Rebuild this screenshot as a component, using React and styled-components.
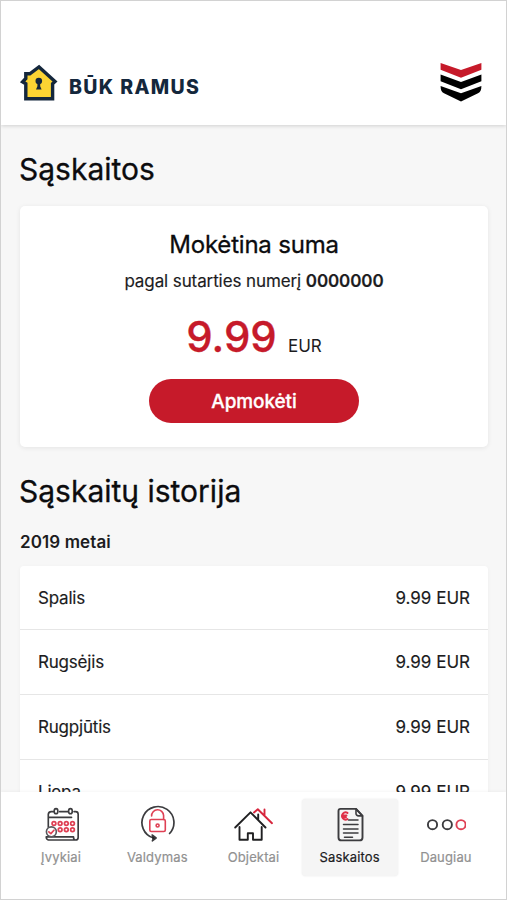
import React from "react";
import styled, { createGlobalStyle } from "styled-components";

const GlobalStyle = createGlobalStyle`
  * {
    box-sizing: border-box;
  }
  body {
    margin: 0;
    background: #fff;
    font-family: Inter, "Liberation Sans", sans-serif;
    color: #1c1c1e;
  }
`;

const bills = [
  { month: "Spalis", amount: "9.99 EUR" },
  { month: "Rugsėjis", amount: "9.99 EUR" },
  { month: "Rugpjūtis", amount: "9.99 EUR" },
  { month: "Liepa", amount: "9.99 EUR" },
];

function HouseLogo() {
  return (
    <svg width="40" height="40" viewBox="0 0 40 40">
      <path
        d="M6.8 36.700V21.800L3.600 19.800L6.800 16.500V11.800H10.800L20 5L36 19.600L33.600 21.800V36.700Z"
        fill="#fbd433"
        stroke="#14273c"
        strokeWidth="3.4"
      />
      <circle cx="19.8" cy="19" r="3.3" fill="#14273c" />
      <path d="M18.4 20h2.800v4.200l1.400 3.200h-5.600l1.400-3.200z" fill="#14273c" />
    </svg>
  );
}

function ShieldLogo() {
  return (
    <svg width="42" height="40" viewBox="0 0 42 40">
      <path d="M0.6 1L21 8L41.400 1V7.700L21 15.800L0.600 7.700Z" fill="#c61a2a" />
      <path d="M0.6 12.500L21 20L41.400 12.500V19.200L21 27.200L0.600 19.200Z" fill="#000" />
      <path d="M0.6 24L21 31.300L41.400 24C41.400 28 40.400 30 38 31.200L21 39.500L4 31.200C1.600 30 0.600 28 0.600 24Z" fill="#000" />
    </svg>
  );
}

function CalendarIcon() {
  const dots = [
    [12, 17.5], [18, 17.5], [24, 17.5], [30, 17.5],
    [18, 23.5], [24, 23.5], [30, 23.5],
  ];
  return (
    <Icon viewBox="0 0 40 40">
      <g transform="translate(0.600 0.500) scale(1.030)">
        <path d="M6.5 21V8.500a3 3 0 0 1 3-2.500h2M17.500 6h8M31.500 6H33a2.500 2.500 0 0 1 2.500 2.500v22.500a2.500 2.500 0 0 1-2.500 2.500H6.500a3 3 0 0 1-2-3H31c0 2 .8 3 2 3" />
        <path d="M7 11.500h22" strokeWidth="1.700" />
        <ellipse cx="14" cy="5.500" rx="1.800" ry="2.500" />
        <ellipse cx="28" cy="5.500" rx="1.800" ry="2.500" />
        {dots.map(([x, y]) => (
          <circle key={`${x}-${y}`} cx={x} cy={y} r="1.800" stroke="#df4054" strokeWidth="1.700" />
        ))}
        <circle cx="9.500" cy="25.500" r="4.800" fill="#fff" stroke="#58585c" />
        <path d="M7 25.500l2 1.800 3-3.300" stroke="#df4054" />
      </g>
    </Icon>
  );
}

function LockIcon() {
  return (
    <Icon viewBox="0 0 40 40">
      <g transform="translate(0.600 -2.500)">
        <path d="M32 31A16 16 0 1 0 15.500 35.300" strokeWidth="1.700" />
        <path d="M14.500 32.500l4 3-3.800 2.800" fill="#222" />
        <g stroke="#df4054">
          <rect x="12.200" y="17" width="15.500" height="12" rx="1.500" />
          <path d="M14 13.500a6 6 0 0 1 12-.5v4" />
          <circle cx="20" cy="23" r="1.500" />
        </g>
      </g>
    </Icon>
  );
}

function HomeIcon() {
  return (
    <Icon viewBox="0 0 40 40">
      <path d="M20 7.500L23.800 4.200L38 18.200M30.500 4.500v5.500" stroke="#d7263d" strokeWidth="1.900" />
      <g stroke="#202022" strokeWidth="1.900">
        <path d="M1.200 22.500L16.500 7.300L31.500 22.500M24.200 9.500v5.500" />
        <path d="M5.500 22v12.800h8.300v-6.500h5.200v6.500h8.700v-12.800" />
      </g>
    </Icon>
  );
}

function InvoiceIcon() {
  return (
    <Icon viewBox="0 0 40 40">
      <g transform="translate(0.500 0.400)">
        <path
          d="M10 3.500h15.500L32 10.500v21.500a3 3 0 0 1-3 3H11a3 3 0 0 1-3-3V5.500a2 2 0 0 1 2-2z"
          strokeWidth="1.900"
        />
        <path d="M25.500 3.500v4.500a2.500 2.500 0 0 0 2.500 2.500h4z" />
        <path d="M18 14.500h9.500M13 19.200h14.500M13 23.500h14.500M13 27.500h14.500M14 31.800h8" strokeWidth="1.500" />
        <path d="M17 7.500a3.600 3.600 0 1 0 0 6.200M12.500 10h3.500M12.500 11.800h3" stroke="#df3048" strokeWidth="1.900" />
      </g>
    </Icon>
  );
}

function MoreIcon() {
  return (
    <Icon viewBox="0 0 40 40">
      <circle cx="6.500" cy="19.700" r="4.600" strokeWidth="1.900" />
      <circle cx="21.300" cy="19.700" r="4.600" strokeWidth="1.900" />
      <circle cx="35" cy="19.700" r="4.600" strokeWidth="1.900" stroke="#df4054" />
    </Icon>
  );
}

const tabs = [
  { label: "Įvykiai", icon: CalendarIcon },
  { label: "Valdymas", icon: LockIcon },
  { label: "Objektai", icon: HomeIcon },
  { label: "Saskaitos", icon: InvoiceIcon, active: true },
  { label: "Daugiau", icon: MoreIcon },
];

function App() {
  return (
    <Phone>
      <GlobalStyle />
      <Header>
        <Brand>
          <HouseLogo />
          <BrandName>BŪK RAMUS</BrandName>
        </Brand>
        <ShieldLogo />
      </Header>
      <Content>
        <Title>Sąskaitos</Title>
        <PayCard>
          <CardTitle>Mokėtina suma</CardTitle>
          <Contract>
            pagal sutarties numerį <b>0000000</b>
          </Contract>
          <Amount>
            9.99 <Currency>EUR</Currency>
          </Amount>
          <PayButton>Apmokėti</PayButton>
        </PayCard>
        <Title>Sąskaitų istorija</Title>
        <Year>2019 metai</Year>
        <BillList>
          {bills.map((bill) => (
            <BillRow key={bill.month}>
              <Month>{bill.month}</Month>
              <span>{bill.amount}</span>
            </BillRow>
          ))}
        </BillList>
      </Content>
      <TabBar>
        {tabs.map(({ label, icon: TabIcon, active }) => (
          <Tab key={label} $active={active}>
            <TabIcon />
            {label}
          </Tab>
        ))}
      </TabBar>
    </Phone>
  );
}

const Phone = styled.div`
  width: 507px;
  height: 900px;
  display: flex;
  flex-direction: column;
  overflow: hidden;
  background: #f7f7f7;
  border: 1px solid #d2d2d2;
`;
const Header = styled.header`
  flex: none;
  height: 124px;
  display: flex;
  align-items: flex-end;
  justify-content: space-between;
  padding: 0 24px 23px 18px;
  background: #fff;
  box-shadow: 0 1px 4px rgba(0, 0, 0, 0.16);
`;
const Brand = styled.div`
  display: flex;
  align-items: center;
  gap: 10px;
`;
const BrandName = styled.div`
  padding-top: 9px;
  font-size: 19.5px;
  font-weight: 800;
  line-height: 24px;
  letter-spacing: 1.35px;
  color: #14273c;
`;
const Content = styled.main`
  flex: 1;
  min-height: 0;
  overflow: hidden;
  padding: 0 18px 0 19px;
`;
const Title = styled.h1`
  margin: 0 0 0 -1px;
  padding-top: 26px;
  height: 81px;
  font-size: 30px;
  font-weight: 400;
  line-height: 36px;
  -webkit-text-stroke: 0.3px;
  color: #0c0c0e;
`;
const PayCard = styled.section`
  height: 241px;
  display: flex;
  flex-direction: column;
  align-items: center;
  padding-top: 23px;
  border-radius: 5px;
  background: #fff;
  box-shadow: 0 1px 5px rgba(0, 0, 0, 0.08);
`;
const CardTitle = styled.h2`
  margin: 0;
  font-size: 24px;
  font-weight: 400;
  line-height: 32px;
  letter-spacing: -0.2px;
  -webkit-text-stroke: 0.3px;
  color: #0c0c0e;
`;
const Contract = styled.div`
  margin-top: 8px;
  font-size: 17px;
  line-height: 24px;
  letter-spacing: -0.1px;
  -webkit-text-stroke: 0.15px;
  b {
    font-weight: 600;
  }
`;
const Amount = styled.div`
  height: 50px;
  margin-top: 18px;
  font-size: 42px;
  font-weight: 500;
  line-height: 52px;
  -webkit-text-stroke: 0.3px;
  color: #c61a2a;
`;
const Currency = styled.span`
  font-size: 17px;
  font-weight: 400;
  -webkit-text-stroke: 0;
  color: #1c1c1e;
`;
const PayButton = styled.button`
  flex: none;
  margin-top: 18px;
  width: 210px;
  height: 44px;
  padding: 0;
  border: 0;
  border-radius: 22px;
  background: #c61a2a;
  color: #fff;
  font-family: inherit;
  font-size: 19px;
  font-weight: 500;
  letter-spacing: -0.1px;
  -webkit-text-stroke: 0.3px;
`;
const Year = styled.h3`
  margin: 0;
  height: 38px;
  padding-top: 2px;
  font-size: 17px;
  font-weight: 600;
  line-height: 25px;
  letter-spacing: 0.1px;
`;
const BillList = styled.div`
  border-radius: 4px;
  background: #fff;
  box-shadow: 0 1px 4px rgba(0, 0, 0, 0.04);
`;
const BillRow = styled.div`
  height: 65px;
  display: flex;
  align-items: center;
  justify-content: space-between;
  padding: 0 18px;
  border-bottom: 1px solid #e6e6e6;
  font-size: 17px;
  -webkit-text-stroke: 0.15px;
  &:first-child {
    height: 64px;
  }
`;
const Month = styled.span`
  letter-spacing: -0.2px;
`;
const TabBar = styled.nav`
  flex: none;
  height: 107px;
  display: flex;
  padding: 7px 12px 0;
  background: #fff;
  box-shadow: 0 -1px 3px rgba(0, 0, 0, 0.04);
`;
const Tab = styled.div`
  flex: 1;
  height: 77px;
  display: flex;
  flex-direction: column;
  align-items: center;
  padding-top: 6px;
  border-radius: 4px;
  background: ${(props) => (props.$active ? "#f5f5f5" : "transparent")};
  box-shadow: ${(props) =>
    props.$active ? "0 0 2px rgba(0, 0, 0, 0.1)" : "none"};
  color: ${(props) => (props.$active ? "#1c1c1e" : "#919191")};
  font-size: 13px;
  line-height: 24px;
  letter-spacing: 0.15px;
  -webkit-text-stroke: 0.2px;
`;
const Icon = styled.svg`
  width: 40px;
  height: 40px;
  fill: none;
  stroke: #3c3c3f;
  stroke-width: 1.6;
  stroke-linecap: round;
  stroke-linejoin: round;
`;

export default App;
